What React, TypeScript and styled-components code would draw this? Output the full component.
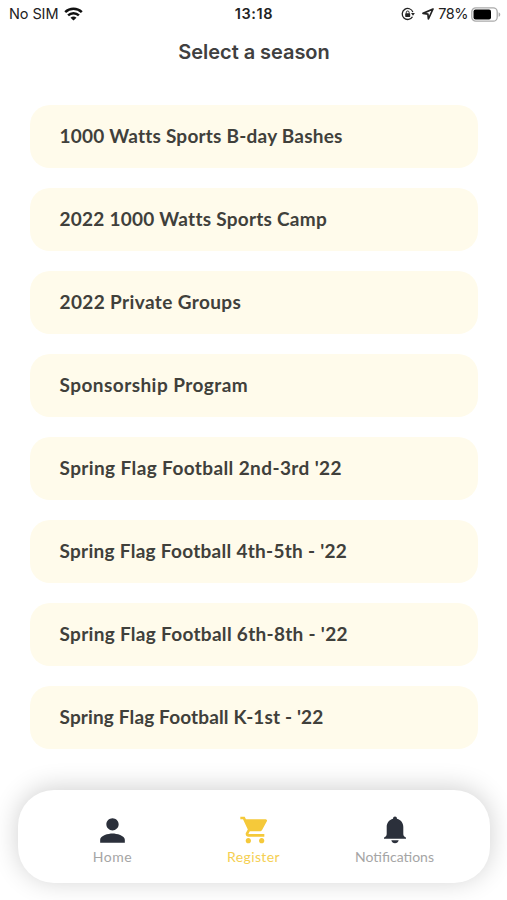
import React from 'react';
import styled, { createGlobalStyle } from 'styled-components';
import { MdPerson, MdShoppingCart } from 'react-icons/md';

const GlobalStyle = createGlobalStyle`
  * {
    box-sizing: border-box;
  }

  body {
    margin: 0;
    background: #fff;
  }
`;

const Screen = styled.div`
  width: 507px;
  height: 900px;
  display: flex;
  flex-direction: column;
  overflow: hidden;
  background: #fff;
  font-family: Lato, 'Liberation Sans', sans-serif;
`;

const StatusBar = styled.div`
  height: 28px;
  padding: 0 6px 0 9px;
  display: grid;
  grid-template-columns: 1fr auto 1fr;
  align-items: center;
  font-family: Inter, 'Liberation Sans', sans-serif;
  font-size: 14.5px;
  line-height: 28px;
  color: #222;
`;

const StatusGroup = styled.div<{ $end?: boolean }>`
  display: flex;
  align-items: center;
  justify-content: ${({ $end }) => ($end ? 'flex-end' : 'flex-start')};
`;

const Carrier = styled.span`
  margin-right: 6px;
  letter-spacing: -0.1px;
`;

const Time = styled.span`
  margin-right: 2px;
  font-weight: 600;
  letter-spacing: 0.6px;
`;

const Percent = styled.span`
  margin: 0 3px 0 4px;
  letter-spacing: -0.5px;
`;

const LockSlot = styled.span`
  display: flex;
  margin-right: 7px;
`;

const Title = styled.h1`
  margin: 11px 0 0;
  padding-left: 1px;
  text-align: center;
  font-family: Inter, 'Liberation Sans', sans-serif;
  font-size: 20px;
  font-weight: 600;
  line-height: 26px;
  letter-spacing: -0.05px;
  color: #404040;
`;

const SeasonList = styled.ul`
  margin: 40px 29px 0 30px;
  padding: 0;
  display: flex;
  flex-direction: column;
  gap: 20px;
  list-style: none;
`;

const SeasonItem = styled.li`
  height: 63px;
  padding: 0 29.5px 3px;
  display: flex;
  align-items: center;
  border-radius: 20px;
  background: #fffbeb;
`;

const SeasonName = styled.span<{ $tracking: number }>`
  font-size: 19px;
  font-weight: 700;
  letter-spacing: ${({ $tracking }) => $tracking}px;
  white-space: nowrap;
  color: #40403b;
`;

const TabBar = styled.nav`
  height: 93px;
  margin: 41px 17px 0 18px;
  padding: 0 25px 0 24px;
  display: grid;
  grid-template-columns: repeat(3, 1fr);
  border-radius: 36px;
  background: #fff;
  box-shadow: 0 -2px 26px rgba(0, 0, 0, 0.19);
`;

const Tab = styled.div<{ $active?: boolean }>`
  padding-top: 23px;
  display: flex;
  flex-direction: column;
  align-items: center;
  color: ${({ $active }) => ($active ? '#f5c93a' : '#2b303b')};
`;

const TabIcon = styled.span<{ $shift?: number }>`
  height: 34px;
  padding-left: ${({ $shift = 0 }) => $shift}px;
  display: flex;
  align-items: center;
`;

const TabLabel = styled.span<{ $active?: boolean; $tracking: number }>`
  font-size: 14px;
  line-height: 19px;
  letter-spacing: ${({ $tracking }) => $tracking}px;
  color: ${({ $active }) => ($active ? '#f5cf52' : '#a5a5a5')};
`;

const WifiIcon = () => (
  <svg width="19" height="14" viewBox="0 0 19 14" fill="none" stroke="#111" strokeWidth="2.5">
    <path d="M1.2 5.2a12 12 0 0 1 16.6 0" />
    <path d="M4.1 8.4a7.8 7.8 0 0 1 10.8 0" />
    <path d="M9.5 13.6 6.5 10.8a4.4 4.4 0 0 1 6 0Z" fill="#111" stroke="none" />
  </svg>
);

const RotationLockIcon = () => (
  <svg width="14" height="14" viewBox="0 0 14 14" fill="none" stroke="#222" strokeWidth="1.3">
    <path d="M11.9 5.1a5.5 5.5 0 1 0-.4 4.6" />
    <path d="M10 6h3.9l-1.9 2.7Z" fill="#222" stroke="none" />
    <path d="M5.3 6.6V5.4a1.4 1.4 0 0 1 2.8 0v1.2" strokeWidth="1" />
    <rect x="4.2" y="6.3" width="5" height="3.6" rx="0.6" fill="#222" stroke="none" />
  </svg>
);

const LocationIcon = () => (
  <svg width="12" height="12" viewBox="0 0 12 12" fill="none" stroke="#222" strokeWidth="1.7" strokeLinejoin="round">
    <path d="M11 1 1 5.4l4.9.7.5 4.9Z" />
  </svg>
);

const BatteryIcon = () => (
  <svg width="30" height="15" viewBox="0 0 30 15">
    <rect x="0.8" y="0.8" width="25.4" height="13.4" rx="4" fill="none" stroke="#aaa" strokeWidth="1.3" />
    <rect x="2.5" y="2.6" width="17.5" height="9.8" rx="2" fill="#000" />
    <path d="M27.6 5.2c2.2.8 2.2 3.8 0 4.6Z" fill="#aaa" />
  </svg>
);

const BellIcon = () => (
  <svg width="22" height="28" viewBox="0 0 22 28" fill="currentColor">
    <path d="M11 .5c1.2 0 1.9.8 2 2.2 4 1 6.3 4.300 6.300 8.300v6.500c0 1.900.5 2.700 1.900 3.500.5.300.8.6.8 1v.8H0v-.8c0-.4.3-.7.8-1 1.400-.8 1.900-1.600 1.900-3.500V11C2.700 7 5 3.700 9 2.700 9.100 1.300 9.800.5 11 .5Z" />
    <path d="M7.300 24.200h7.400c-.5 1.900-1.800 3-3.700 3s-3.200-1.100-3.700-3Z" />
  </svg>
);

const seasons = [
  { name: '1000 Watts Sports B-day Bashes', tracking: 0.22 },
  { name: '2022 1000 Watts Sports Camp', tracking: 0.25 },
  { name: '2022 Private Groups', tracking: 0.38 },
  { name: 'Sponsorship Program', tracking: 0.45 },
  { name: "Spring Flag Football 2nd-3rd '22", tracking: 0.39 },
  { name: "Spring Flag Football 4th-5th - '22", tracking: 0.28 },
  { name: "Spring Flag Football 6th-8th - '22", tracking: 0.3 },
  { name: "Spring Flag Football K-1st - '22", tracking: 0.14 },
];

const tabs = [
  { label: 'Home', icon: <MdPerson size={37} />, tracking: 0.5 },
  { label: 'Register', icon: <MdShoppingCart size={32} />, tracking: 0.4, active: true, shift: 2 },
  { label: 'Notifications', icon: <BellIcon />, tracking: 0 },
];

const App: React.FC = () => {
  return (
    <Screen>
      <GlobalStyle />
      <StatusBar>
        <StatusGroup>
          <Carrier>No SIM</Carrier>
          <WifiIcon />
        </StatusGroup>
        <Time>13:18</Time>
        <StatusGroup $end>
          <LockSlot>
            <RotationLockIcon />
          </LockSlot>
          <LocationIcon />
          <Percent>78%</Percent>
          <BatteryIcon />
        </StatusGroup>
      </StatusBar>
      <Title>Select a season</Title>
      <SeasonList>
        {seasons.map(({ name, tracking }) => (
          <SeasonItem key={name}>
            <SeasonName $tracking={tracking}>{name}</SeasonName>
          </SeasonItem>
        ))}
      </SeasonList>
      <TabBar>
        {tabs.map(({ label, icon, tracking, active, shift }) => (
          <Tab key={label} $active={active}>
            <TabIcon $shift={shift}>{icon}</TabIcon>
            <TabLabel $active={active} $tracking={tracking}>
              {label}
            </TabLabel>
          </Tab>
        ))}
      </TabBar>
    </Screen>
  );
};

export default App;
